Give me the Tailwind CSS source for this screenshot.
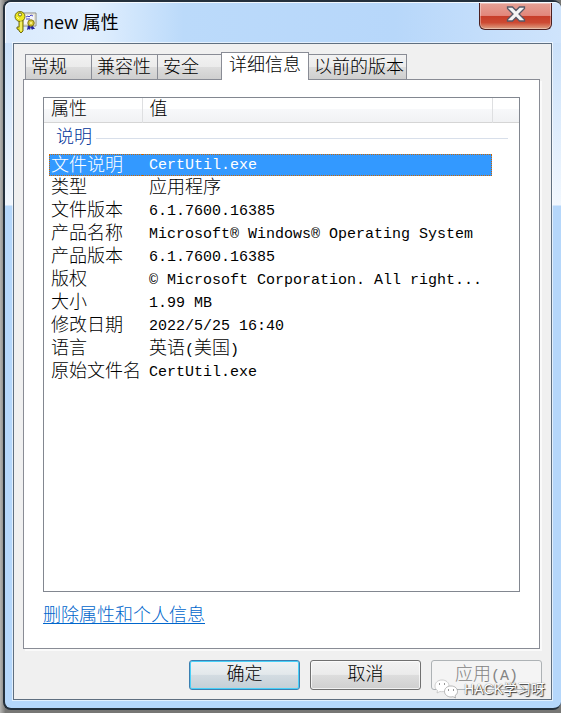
<!DOCTYPE html>
<html lang="zh-CN">
<head>
    <meta charset="UTF-8">
    <meta name="viewport" content="width=device-width, initial-scale=1.0">
    <title>new 属性</title>
    <script src="https://cdn.jsdelivr.net/npm/@tailwindcss/browser@4"></script>
</head>
<body class="relative flex min-h-screen flex-col bg-linear-to-r from-[#b5b5b3] via-[#777775] via-1% to-[#777775] pb-[3px] pl-[3px] font-['Liberation_Mono','Noto_Sans_CJK_SC',monospace] text-lg leading-[23px] font-light text-black">

<!-- Window frame -->
<div class="flex grow flex-col rounded-l-lg rounded-tr-lg rounded-br-lg border-2 border-r-0 border-[#24303c] bg-[#b5d7fb] bg-[linear-gradient(to_bottom,#c2dcf9_0px,#d3e6fb_80px,#f1f7fe_203px,#b5d7fb_204px)]">

    <!-- Title bar -->
    <div class="flex h-[41px] shrink-0 items-start justify-between rounded-t-md border-t border-l border-white/80 bg-[linear-gradient(to_right,#d9eafd,#e3f0fe_15%,#bbdafa_32%,#b7d7fa_70%,#cfe4fc)] pl-2">
        <div class="flex h-[38px] items-center gap-[5px]">
            <svg class="h-6 w-6" viewBox="0 0 24 24" aria-hidden="true">
                <path d="M8 3h14v13H8z" fill="#f4f4fc" stroke="#8c8c80"/>
                <path d="M9.500 4.500h11v10h-11z" fill="none" stroke="#d8d5a8" stroke-dasharray="1 1"/>
                <path d="M12 7l2-1 1 1 2-2 2 1M12 9h4" fill="none" stroke="#4646c8"/>
                <path d="M14 15l-1 5 2-1 1 1 1-4M18 15l3 4-2 0-1 1-2-4" fill="#2424a0"/>
                <circle cx="17" cy="13" r="3.200" fill="#d9ca35" stroke="#817518"/>
                <circle cx="17" cy="13" r="1" fill="#fff9a0"/>
                <path d="M5 10h4v11l-2 2-2-2v-1l-2-1v-2h2z" fill="#e4df22" stroke="#706c16"/>
                <circle cx="6" cy="6.500" r="5" fill="#eee91f" stroke="#706c16"/>
                <circle cx="6" cy="4.500" r="1.600" fill="#f8f8d8" stroke="#706c16"/>
                <path d="M7 11v10M3 7l2 2" stroke="#fffca0"/>
            </svg>
            <h1 class="font-['Open_Sans','Noto_Sans_CJK_SC',sans-serif] text-lg font-normal">new 属性</h1>
        </div>
        <button type="button" aria-label="关闭" class="mr-[9px] flex h-[27px] w-[73px] items-center justify-center rounded-b-md border border-t-0 border-[#4c2020] bg-[linear-gradient(to_bottom,#e6a196,#e2877b_48%,#c73d29_50%,#cd4a33_75%,#dea183)] pb-1 shadow-[inset_0_0_0_1px_rgb(255_255_255/0.35)]">
            <svg class="h-4 w-5" viewBox="0 0 20 16" aria-hidden="true">
                <path d="M1.500 1h5L10 4.500 13.500 1h5v1.500L13 8l5.500 5.500V15h-5L10 11.500 6.500 15h-5v-1.500L7 8 1.500 2.500z" fill="#f4f4f4" stroke="#575867" stroke-width="1.300"/>
            </svg>
        </button>
    </div>

    <!-- Client area -->
    <div class="mr-[9px] mb-2 ml-2 flex grow flex-col border border-[#5f6f80] bg-[#f0f0f0] px-[9px] pt-2 pb-[9px] outline outline-white/60">

        <!-- Tabs -->
        <div role="tablist" class="relative z-10 -mb-px flex h-7 items-end pl-[2px] whitespace-nowrap">
            <button role="tab" type="button" class="h-[26px] w-[67px] border border-[#898c95] bg-[linear-gradient(to_bottom,#f2f2f2,#ebebeb_50%,#dddddd_50%,#cfcfcf)] pt-[2px] pl-[5px] text-left">常规</button>
            <button role="tab" type="button" class="-ml-px h-[26px] w-[67px] border border-[#898c95] bg-[linear-gradient(to_bottom,#f2f2f2,#ebebeb_50%,#dddddd_50%,#cfcfcf)] pt-[2px] pl-[5px] text-left">兼容性</button>
            <button role="tab" type="button" class="-ml-px h-[26px] w-[65px] border border-[#898c95] bg-[linear-gradient(to_bottom,#f2f2f2,#ebebeb_50%,#dddddd_50%,#cfcfcf)] pt-[2px] pl-[5px] text-left">安全</button>
            <button role="tab" type="button" aria-selected="true" class="-ml-px h-7 w-[88px] border border-b-0 border-[#898c95] bg-white pl-[7px] text-left">详细信息</button>
            <button role="tab" type="button" class="-ml-px h-[26px] w-[99px] border border-[#898c95] bg-[linear-gradient(to_bottom,#f2f2f2,#ebebeb_50%,#dddddd_50%,#cfcfcf)] pt-[2px] pl-[5px] text-left">以前的版本</button>
        </div>

        <!-- Details panel -->
        <div role="tabpanel" class="mr-[2px] flex grow flex-col border border-[#898c95] bg-white px-[19px] pt-[17px] pb-5 shadow-[2px_2px_0_#fafafa]">
            <div class="grow border border-[#828790]">
                <table class="w-full table-fixed border-collapse text-left whitespace-nowrap">
                    <colgroup>
                        <col class="w-[98px]">
                        <col>
                        <col class="w-[27px]">
                    </colgroup>
                    <thead>
                        <tr class="h-6 border-b border-[#d5d5d5] bg-[linear-gradient(to_bottom,#ffffff_45%,#f7f8fa_46%,#f1f2f4)]">
                            <th class="border-r border-[#dedfe1] p-0 pt-px pl-[7px] font-light">属性</th>
                            <th class="border-r border-[#dedfe1] p-0 pt-px pl-[7px] font-light">值</th>
                            <td></td>
                        </tr>
                    </thead>
                    <tbody>
                        <tr class="h-[31px]">
                            <th colspan="3" class="p-0 pr-[11px] pl-3 font-light text-[#003399]">
                                <div class="flex items-center gap-1">说明<span class="h-px grow bg-[#d8dfea]"></span></div>
                            </th>
                        </tr>
                        <tr class="h-[23px] text-white">
                            <td class="p-0 pl-[5px] align-top"><div class="h-[22px] border border-r-0 border-dotted border-[#cc6600] bg-[#3399ff] pl-px leading-[22px]">文件说明</div></td>
                            <td class="p-0 align-top"><div class="h-[22px] border border-l-0 border-dotted border-[#cc6600] bg-[#3399ff] pl-[7px] text-[15px] leading-[22px]">CertUtil.exe</div></td>
                            <td></td>
                        </tr>
                        <tr class="h-[23px]"><td class="p-0 pl-[7px]">类型</td><td class="p-0 pl-[7px]">应用程序</td></tr>
                        <tr class="h-[23px]"><td class="p-0 pl-[7px]">文件版本</td><td class="p-0 pl-[7px] text-[15px]">6.1.7600.16385</td></tr>
                        <tr class="h-[23px]"><td class="p-0 pl-[7px]">产品名称</td><td class="p-0 pl-[7px] text-[15px]">Microsoft® Windows® Operating System</td></tr>
                        <tr class="h-[23px]"><td class="p-0 pl-[7px]">产品版本</td><td class="p-0 pl-[7px] text-[15px]">6.1.7600.16385</td></tr>
                        <tr class="h-[23px]"><td class="p-0 pl-[7px]">版权</td><td class="p-0 pl-[7px] text-[15px]">© Microsoft Corporation. All right...</td></tr>
                        <tr class="h-[23px]"><td class="p-0 pl-[7px]">大小</td><td class="p-0 pl-[7px] text-[15px]">1.99 MB</td></tr>
                        <tr class="h-[23px]"><td class="p-0 pl-[7px]">修改日期</td><td class="p-0 pl-[7px] text-[15px]">2022/5/25 16:40</td></tr>
                        <tr class="h-[23px]"><td class="p-0 pl-[7px]">语言</td><td class="p-0 pl-[7px]">英语<span class="text-[15px] leading-none">(</span>美国<span class="text-[15px] leading-none">)</span></td></tr>
                        <tr class="h-[23px]"><td class="p-0 pl-[7px]">原始文件名</td><td class="p-0 pl-[7px] text-[15px]">CertUtil.exe</td></tr>
                    </tbody>
                </table>
            </div>
            <a href="#" class="mt-[13px] self-start text-[#0066cc] underline underline-offset-2">删除属性和个人信息</a>
        </div>

        <!-- Buttons -->
        <div class="mt-[11px] flex justify-end gap-[10px]">
            <button type="button" class="h-[30px] w-[111px] rounded-[3px] border border-[#3c7fb1] bg-[linear-gradient(to_bottom,#eff2f4,#e2e8eb_48%,#d3dce2_50%,#c4cfd6)] pt-px shadow-[inset_0_0_0_1px_#48d0f8]">确定</button>
            <button type="button" class="h-[30px] w-[111px] rounded-[3px] border border-[#707070] bg-[linear-gradient(to_bottom,#f2f2f2,#ebebeb_48%,#dddddd_50%,#cfcfcf)] pt-px shadow-[inset_0_0_0_1px_rgb(255_255_255/0.7)]">取消</button>
            <button type="button" disabled class="h-[30px] w-[111px] rounded-[3px] border border-[#adb2b5] bg-[#f4f4f4] pt-px text-[#838383]">应用<span class="text-[15px] leading-none">(A)</span></button>
        </div>
    </div>
</div>

<!-- Watermark -->
<div class="absolute right-4 bottom-[14px] z-20 flex items-center gap-[6px]">
    <svg class="h-5 w-6" viewBox="0 0 24 20" aria-hidden="true">
        <path d="M8 1C3.500 1 1 4 1 7c0 2 1 3.500 2.500 4.500L3 14l3-1.500c5 1 9-2 9-5.500S12 1 8 1z" fill="#fff" stroke="#bbb" stroke-width=".7"/>
        <path d="M17 7c-4 0-6.500 2.500-6.500 5.500s3 5.500 6.500 5.500l2-.3 2.500 1.300-.5-2.300c1.500-1 2.500-2.500 2.500-4.200C23.500 9.500 21 7 17 7z" fill="#fff" stroke="#999" stroke-width=".7"/>
        <path d="M5 5h1M10 5h1M14 11h1M19 11h1" stroke="#777" stroke-width="1.500"/>
    </svg>
    <span class="font-['Liberation_Sans','Noto_Sans_CJK_SC',sans-serif] text-sm leading-5 font-normal text-white [text-shadow:1px_1px_1px_#333,0_0_1px_#555]">HACK学习呀</span>
</div>

</body>
</html>
